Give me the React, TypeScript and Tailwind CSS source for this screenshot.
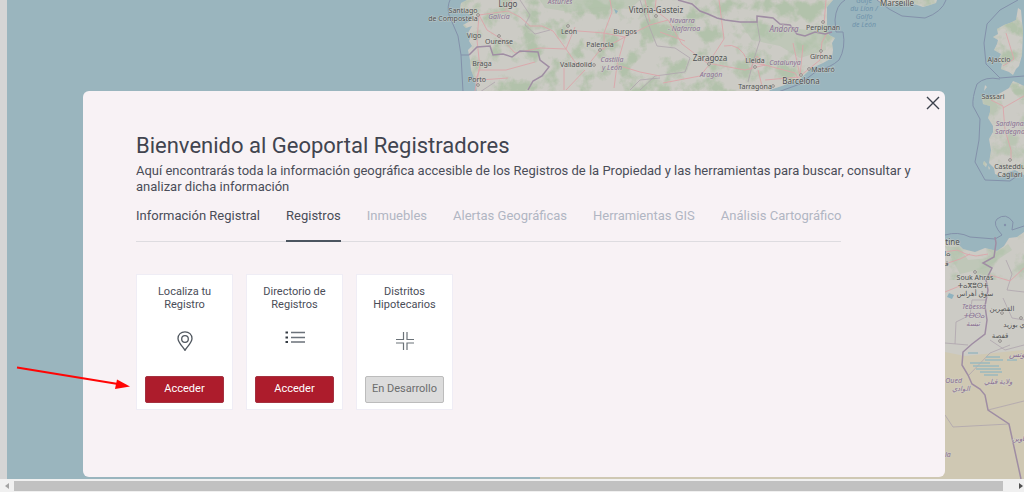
import { useState } from "react";
import clsx from "clsx";

const tabs = [
  { name: "Información Registral" },
  { name: "Registros" },
  { name: "Inmuebles", disabled: true },
  { name: "Alertas Geográficas", disabled: true },
  { name: "Herramientas GIS", disabled: true },
  { name: "Análisis Cartográfico", disabled: true },
];

const cards = [
  { title: "Localiza tu Registro", icon: <PinIcon />, enabled: true },
  { title: "Directorio de Registros", icon: <ListIcon />, enabled: true },
  { title: "Distritos Hipotecarios", icon: <CrossIcon />, enabled: false },
];

// [name, x, y, size]
const cities: [string, number, number, number][] = [
  ["Lugo", 508, 7, 8],
  ["Santiago", 463, 13, 7],
  ["de Compostela", 453, 21, 7],
  ["Vigo", 474, 38, 7],
  ["Ourense", 499, 44, 7],
  ["Braga", 482, 66, 7],
  ["Porto", 477, 82, 7],
  ["León", 569, 34, 7],
  ["Burgos", 625, 34, 7],
  ["Palencia", 600, 47, 7],
  ["Valladolid", 576, 67, 7],
  ["Vitoria-Gasteiz", 656, 13, 8],
  ["Zaragoza", 710, 61, 8],
  ["Lleida", 755, 63, 7],
  ["Perpignan", 823, 30, 7],
  ["Girona", 821, 59, 7],
  ["Mataró", 823, 72, 7],
  ["Barcelona", 801, 84, 8],
  ["Tarragona", 755, 89, 7],
  ["Marseille", 897, 6, 8],
  ["Ajaccio", 999, 62, 7],
  ["Sassari", 993, 99, 7],
  ["Casteddu/", 1011, 169, 7],
  ["Cagliari", 1010, 177, 7],
  ["Constantine", 937, 245, 8],
  ["ⵇⵙⴰⵏⵟⵉⵏⴰ", 934, 256, 7],
  ["قسنطينة", 936, 266, 7],
  ["Souk Ahras", 975, 280, 7],
  ["ⵜⴰⴳⵓⵙⵜ", 973, 288, 7],
  ["سوق أهراس", 975, 296, 7],
  ["القصرين", 1002, 311, 7],
  ["سيدي بوزيد", 1020, 327, 7],
  ["قفصة", 1000, 338, 7],
];

const regions: [string, number, number, number][] = [
  ["Asturies", 560, 4, 7],
  ["Galicia", 499, 19, 7],
  ["Castilla", 612, 62, 7],
  ["y León", 612, 70, 7],
  ["Navarra", 682, 23, 7],
  ["- Nafarroa", 684, 31, 7],
  ["Andorra", 784, 32, 8],
  ["Catalunya", 785, 65, 7],
  ["Aragón", 711, 77, 7],
  ["Sardigna/", 1011, 126, 7],
  ["Sardegna", 1010, 134, 7],
  ["Tebessa", 974, 309, 7],
  ["ⵜⴱⵙⴰ", 974, 318, 7],
  ["تبسة", 973, 326, 7],
  ["تونس", 1018, 357, 8],
  ["El Oued", 950, 383, 7],
  ["الوادي", 961, 391, 7],
  ["ولاية قبلي", 998, 384, 7],
  ["تطاوين", 1022, 441, 7],
  ["Ouargla", 938, 457, 7],
];

const seas: [string, number, number][] = [
  ["Golfe", 864, 3],
  ["du Lion /", 864, 11],
  ["Golfo", 864, 19],
  ["de León", 864, 27],
];

const LAND =
  "M467 0 L461 3 L460 8 L464 11 L472 16 L470 21 L463 25 L466 28 L472 26 L468 33 L471 36 L469 41 L472 46 L468 50 L470 60 L471 70 L475 80 L477 92 L477 110 L755 110 L770 90 L782 86 L800 79 L812 68 L823 63 L832 58 L833 50 L832 43 L835 38 L829 35 L827 27 L827 7 L833 0 Z " +
  "M877 0 L882 4 L895 4 L900 1 L908 4 L914 4 L923 7 L930 5 L936 3 L937 0 Z " +
  "M1018 8 L1016 20 L1010 23 L1004 25 L997 29 L998 34 L993 37 L998 40 L997 44 L994 50 L1001 54 L998 60 L1002 64 L1001 69 L1009 72 L1013 75 L1016 69 L1019 66 L1022 55 L1023 33 L1021 10 Z " +
  "M982 97 L983 104 L990 106 L990 112 L988 118 L993 126 L993 132 L989 139 L991 150 L989 163 L994 168 L995 174 L1003 177 L1008 172 L1015 170 L1024 175 L1024 86 L1018 83 L1013 81 L1009 88 L997 95 L989 98 Z " +
  "M540 480 L540 245 L945 242 L955 241 L963 249 L975 252 L985 248 L997 251 L1004 246 L1009 238 L1017 237 L1024 232 L1024 480 Z " +
  "M984 161 l3 3 l-1 3 l-3 -3 Z M988 166 l2 2 l-1 2 Z M985 85 l2 2 l-3 4 Z";

const BORDERS =
  "M469 55 L477 47 L490 46 L493 55 L503 54 L512 57 L520 51 L538 52 L540 60 L549 67 L542 76 L533 81 L528 90 " +
  "M678 0 L692 4 L700 11 L708 14 L717 18 L725 20 L740 22 L757 22 L757 16 L773 18 L780 24 L790 25 L797 34 L805 36 L815 32 L825 34 L832 32 " +
  "M1021 479 L1009 424 L988 410 L985 395 L980 389 L972 384 L968 375 L962 365 L963 352 L972 344 L985 334 L987 320 L985 306 L988 290 L986 280 L992 268 L983 263 L994 257 L996 243 L995 237";

const SEA_BORDERS =
  "M450 0 Q447 6 449 15 L458 36 L461 55 L463 92 M461 55 L469 55 " +
  "M845 0 Q836 5 835 20 L836 32 L843 32 Q846 48 839 60 Q830 68 818 70 L800 84 L778 92 " +
  "M877 0 L889 9 L902 16 L925 18 Q942 12 946 0 " +
  "M1018 0 L1000 10 L987 24 L984 43 L986 64 L1000 78 L1024 76 " +
  "M1000 79 Q985 76 977 84 Q972 98 973 106 L980 119 L979 140 L975 162 L985 180 L1010 181 L1020 174 " +
  "M945 235 Q958 231 970 237 L995 239 L1002 235 Q992 224 997 219 Q1006 212 1013 222 L1012 230 L1024 226";

const ROADS =
  "M475 82 L480 68 L477 40 L479 15 L508 11 L520 17 L530 26 L542 26 L553 31 L566 49 L577 65 L588 65 L600 50 L625 37 L650 25 L668 20 L682 44 L707 63 L745 70 L765 65 L795 73 L800 82 " +
  "M479 15 L487 30 L503 40 L515 53 L540 48 L566 49 M505 10 L512 0 M566 30 L604 33 L625 37 M604 33 L604 50 M604 33 L612 12 L610 0 M625 37 L617 65 L640 72 L660 76 M617 65 L614 88 M585 70 L566 90 M564 68 V90 M566 49 L575 27 " +
  "M478 70 L506 70 L535 62 M480 80 L508 78 M481 60 L475 91 M668 20 L655 10 L656 0 M650 22 L645 0 M660 32 L685 41 M709 65 L700 76 L663 83 M709 62 L724 39 L719 0 " +
  "M724 46 Q740 42 748 62 L765 65 M750 70 L757 56 L765 66 M765 80 L800 77 M800 76 L803 45 M800 76 L793 43 M800 76 L820 60 L822 42 L827 33 M824 24 L826 0 M758 70 L763 90 " +
  "M1006 33 L1014 59 L1003 66 M991 100 L1003 106 L1005 130 L1011 150 L1011 160 M1003 108 L1024 96 " +
  "M945 252 L957 250 L966 254 L976 256 L988 254 M945 264 L960 259 L970 254 M945 292 L962 285 M990 275 L1010 281 L1024 268";

const PROVINCES =
  "M520 0 L530 15 L525 25 L535 34 L550 30 M640 0 L645 15 L651 31 L657 46 L675 48 L690 58 L685 72 L655 76 L640 90 M757 22 L760 40 L753 62 L748 82 M630 90 L640 80 L660 78 M480 92 L495 82 " +
  "M945 343 L968 345 M955 344 L956 322 L970 315 L972 300 L986 300 M990 340 L1005 350 L1024 345 M1003 298 L1012 318 L1024 320 M1006 260 L1012 274 L1007 290 L1024 292 M968 376 L990 353 L1010 345 M945 415 L953 427 L1009 424 M988 410 L1024 401";

function PinIcon() {
  return (
    <svg className="h-5 w-4" viewBox="0 0 16 20" fill="none" stroke="#50575f" strokeWidth="1.3">
      <path d="M8 19.3 C6 16 1 11.5 1 7.5 C1 3.5 4 0.8 8 0.8 C12 0.8 15 3.5 15 7.5 C15 11.5 10 16 8 19.3 Z" />
      <circle cx="8" cy="8" r="3.3" />
    </svg>
  );
}

function ListIcon() {
  return (
    <svg className="h-3 w-5" viewBox="0 0 20 12">
      <path d="M6 1.5 H20 M6 6.5 H20 M6 11 H20" stroke="#6b727a" strokeWidth="1.5" />
      <path d="M0.5 1.5 H3 M0.5 6.5 H3 M0.5 11 H3" stroke="#343b43" strokeWidth="2" />
    </svg>
  );
}

function CrossIcon() {
  return (
    <svg className="size-5" viewBox="0 0 20 20" fill="none" stroke="#6b7278" strokeWidth="1.2">
      <path d="M8.5 1 V8.5 H1 M12 1 V8.5 H19 M1 12 H8.5 V19 M19 12 H12 V19" />
    </svg>
  );
}

function MapBackground() {
  return (
    <svg
      className="absolute inset-0 size-full"
      viewBox="0 0 1024 479"
      preserveAspectRatio="xMaxYMin slice"
      aria-hidden="true"
    >
      <defs>
        <clipPath id="land">
          <path d={LAND} />
        </clipPath>
        <filter id="woods" x="0" y="0" width="100%" height="100%" colorInterpolationFilters="sRGB">
          <feTurbulence type="fractalNoise" baseFrequency="0.05" numOctaves="5" seed="8" />
          <feColorMatrix values="0 0 0 0 0.7  0 0 0 0 0.76  0 0 0 0 0.67  5 0 0 0 -2.4" />
        </filter>
      </defs>
      <rect width="1024" height="479" fill="#9ab5be" />
      <path d={LAND} fill="#cccbc5" />
      <g clipPath="url(#land)">
        <rect x="440" width="584" height="100" filter="url(#woods)" />
        <rect x="940" y="80" width="84" height="200" filter="url(#woods)" opacity="0.7" />
        <path d="M540 0 H640 L630 9 L600 7 L570 12 L545 8 Z M740 22 L825 32 L826 50 L800 58 L780 46 L752 40 Z M945 246 L960 248 L968 260 L990 258 L1008 244 L1012 250 L985 268 L960 274 Z" fill="#b2c3ab" opacity="0.5" />
        <path d="M540 479 V352 H945 L965 356 L1024 350 V479 Z" fill="#cfc8b3" />
      </g>
      <path d={PROVINCES} fill="none" stroke="#afa4ad" strokeWidth="0.8" />
      <path d={ROADS} fill="none" stroke="#dba5a9" strokeWidth="0.9" />
      <path d={SEA_BORDERS} fill="none" stroke="#8391aa" strokeWidth="1" />
      <path d={BORDERS} fill="none" stroke="#9f8da3" strokeWidth="1.5" />
      <path
        d="M968 353 H978 M970 363 H990 M973 366 H999 M976 369 H1001 M980 372 H1002 M984 375 H998 M986 357 H1000 M985 360 H1003 M1007 360 H1017"
        stroke="#9ab8bf"
        strokeWidth="1.5"
      />
      <path d="M949 293 l5 2 l-2 4 l-5 -2 Z M614 9 l4 2 l-2 3 Z" fill="#8fb2bf" />
      <circle cx="1005" cy="225" r="1.2" fill="#8391aa" />
      <g fill="#cfcdc7" stroke="#7d7777" strokeWidth="0.7">
        {[[478, 15], [499, 36], [478, 85], [568, 26], [600, 50], [594, 65], [656, 16], [709, 64], [755, 67], [773, 86], [809, 69], [801, 75], [823, 22], [821, 51], [975, 272], [1002, 313], [1000, 341], [1021, 318], [1010, 160]].map(
          ([cx, cy]) => (
            <circle key={`${cx}-${cy}`} cx={cx} cy={cy} r="1.4" />
          ),
        )}
      </g>
      <g
        className="font-['Noto_Sans','DejaVu_Sans',sans-serif]"
        textAnchor="middle"
        stroke="#d3d3cd"
        strokeWidth="1.2"
        strokeOpacity="0.6"
        paintOrder="stroke"
      >
        <g fill="#4f5152">
          {cities.map(([name, x, y, size]) => (
            <text key={name} x={x} y={y} fontSize={size}>{name}</text>
          ))}
        </g>
        <g fill="#8a7194" fontStyle="italic">
          {regions.map(([name, x, y, size]) => (
            <text key={name} x={x} y={y} fontSize={size}>{name}</text>
          ))}
        </g>
        <g fill="#6f93ab" fontStyle="italic" stroke="none">
          {seas.map(([name, x, y]) => (
            <text key={name} x={x} y={y} fontSize={7}>{name}</text>
          ))}
        </g>
      </g>
    </svg>
  );
}

function WelcomeDialog() {
  const [active, setActive] = useState("Registros");

  return (
    <section
      role="dialog"
      aria-labelledby="welcome-title"
      className="relative mt-[91px] mr-[79px] mb-[2px] ml-[76px] flex-1 rounded-md bg-[#f8f2f5] pt-[41px] pr-6 pl-[53px] text-[#4a4d58]"
    >
      <button type="button" aria-label="Cerrar" className="absolute top-[5px] right-[5px]">
        <svg className="size-[14px]" viewBox="0 0 14 14" stroke="#3c414c" strokeWidth="1.4">
          <path d="M1 1 L13 13 M13 1 L1 13" />
        </svg>
      </button>
      <h1 id="welcome-title" className="text-[22px] leading-7 text-[#41444f]">
        Bienvenido al Geoportal Registradores
      </h1>
      <p className="mt-[3px] text-[13px] leading-4">
        Aquí encontrarás toda la información geográfica accesible de los Registros de la Propiedad y las
        herramientas para buscar, consultar y analizar dicha información
      </p>
      <div role="tablist" className="mt-[13px] flex w-fit gap-[26px] border-b border-[#dedce0]">
        {tabs.map((tab) => (
          <button
            key={tab.name}
            type="button"
            role="tab"
            aria-selected={active === tab.name}
            disabled={tab.disabled}
            onClick={() => setActive(tab.name)}
            className={clsx(
              "-mb-px border-b-2 pb-4 text-[13px] leading-4 whitespace-nowrap",
              active === tab.name ? "border-[#4c5560]" : "border-transparent",
              tab.disabled && "text-[#b1b6c3]",
            )}
          >
            {tab.name}
          </button>
        ))}
      </div>
      <div className="mt-8 flex flex-wrap gap-[13px]">
        {cards.map((card) => (
          <article
            key={card.title}
            className="flex h-[136px] w-[97px] flex-col items-center border border-[#efedf5] bg-white px-2 pt-2.5 pb-1.5"
          >
            <h2 className="w-[72px] text-center text-[11px] leading-[13px]">{card.title}</h2>
            <div className="mt-5 flex-1">{card.icon}</div>
            <button
              type="button"
              disabled={!card.enabled}
              className={clsx(
                "h-[27px] w-full rounded-xs border text-[11px]",
                card.enabled
                  ? "border-[#a5313f] bg-[#ad1c2c] text-white"
                  : "border-[#bcbcbc] bg-[#dcdcdc] text-[#6b6d6d]",
              )}
            >
              {card.enabled ? "Acceder" : "En Desarrollo"}
            </button>
          </article>
        ))}
      </div>
    </section>
  );
}

export default function App() {
  return (
    <div className="flex h-screen flex-col overflow-hidden bg-[#f0f0f0] font-['Roboto',sans-serif]">
      <main className="relative flex flex-1 flex-col border-l-[7px] border-[#d5d5d5]">
        <MapBackground />
        <WelcomeDialog />
        {/* pointer to the first card */}
        <svg className="absolute top-[364px] left-[9px] h-7 w-[115px]" viewBox="0 0 115 28">
          <path d="M1 3.5 L102 20" stroke="#ff0505" strokeWidth="2.2" />
          <path d="M101 15.5 L114 22.5 L99 25 Z" fill="#ff0505" />
        </svg>
      </main>
      <div className="flex h-[13px] items-center justify-between py-px pr-px pl-[5px]">
        <svg className="h-2 w-1" viewBox="0 0 4 8" fill="#a3a3a3">
          <path d="M4 1 V7 L0 4 Z" />
        </svg>
        <div className="mr-4 ml-[5px] h-2.5 flex-1 bg-[#c1c1c1]" />
        <svg className="h-2 w-1" viewBox="0 0 4 8" fill="#505050">
          <path d="M0 1 V7 L4 4 Z" />
        </svg>
      </div>
    </div>
  );
}
